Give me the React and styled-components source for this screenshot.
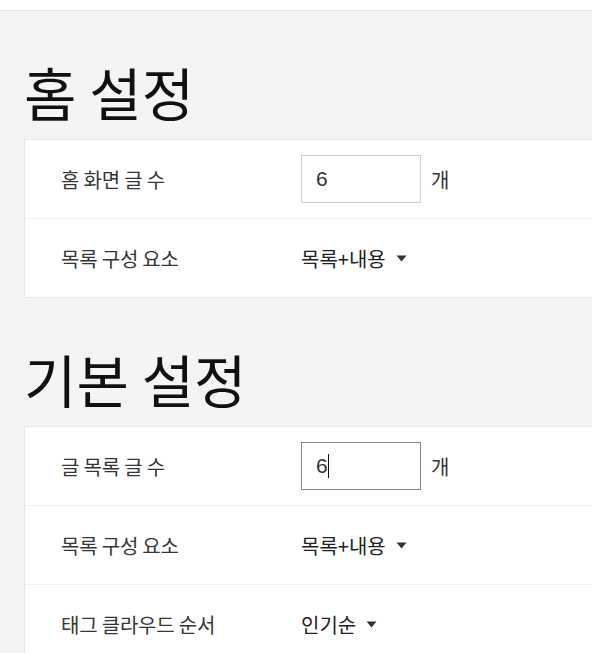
import React from "react";
import styled, { createGlobalStyle } from "styled-components";

const Global = createGlobalStyle`
  html, body { margin: 0; padding: 0; background: #f3f4f6; overflow: hidden; }
  body { font-family: "Noto Sans CJK KR", "Noto Sans", sans-serif; color: #222; }
`;

const TopBar = styled.div`
  height: 10px;
  background: #ffffff;
  border-bottom: 1px solid #e3e5ea;
`;

const Main = styled.main`
  padding: 0 0 40px 24px;
`;

const Section = styled.section`
  display: flex;
  flex-direction: column;
`;

const Heading = styled.h1`
  margin: 0;
  padding: 47px 0 15px 0;
  font-size: 57px;
  line-height: 66px;
  font-weight: 400;
  color: #111;
  letter-spacing: 0;
`;

const Card = styled.div`
  width: 700px;
  background: #fff;
  border: 1px solid #e4e7ec;
  border-right: none;
`;

const Row = styled.div`
  display: grid;
  grid-template-columns: 240px 1fr;
  align-items: center;
  height: 78px;
  padding-left: 36px;
  & + & { border-top: 1px solid #eeeff2; }
`;

const Label = styled.div`
  font-size: 20px;
  color: #363636;
  letter-spacing: -0.2px;
`;

const Control = styled.div`
  display: flex;
  align-items: center;
  gap: 10px;
`;

const NumInput = styled.div`
  box-sizing: border-box;
  width: 120px;
  height: 48px;
  border: 1px solid ${(p) => (p.$focused ? "#7f8795" : "#c8d0dc")};
  display: flex;
  align-items: center;
  padding-left: 14px;
  font-family: "Liberation Sans", sans-serif;
  font-size: 21px;
  color: #333;
`;

const Caret = styled.span`
  display: inline-block;
  width: 1px;
  height: 24px;
  background: #111;
`;

const Unit = styled.span`
  font-size: 20px;
  color: #333;
`;

const Select = styled.div`
  display: flex;
  align-items: center;
  gap: 10px;
  font-size: 20px;
  color: #222;
  letter-spacing: 0;
`;

const Arrow = () => (
  <svg width="11" height="7" viewBox="0 0 11 7">
    <path d="M0.5 0.5 L10.5 0.5 L5.5 6.5 Z" fill="#333" />
  </svg>
);

export default function App() {
  return (
    <>
      <Global />
      <TopBar />
      <Main>
        <Section>
          <Heading>홈 설정</Heading>
          <Card>
            <Row>
              <Label>홈 화면 글 수</Label>
              <Control>
                <NumInput>6</NumInput>
                <Unit>개</Unit>
              </Control>
            </Row>
            <Row>
              <Label>목록 구성 요소</Label>
              <Select>목록+내용 <Arrow /></Select>
            </Row>
          </Card>
        </Section>
        <Section>
          <Heading>기본 설정</Heading>
          <Card>
            <Row>
              <Label>글 목록 글 수</Label>
              <Control>
                <NumInput $focused>6<Caret /></NumInput>
                <Unit>개</Unit>
              </Control>
            </Row>
            <Row>
              <Label>목록 구성 요소</Label>
              <Select>목록+내용 <Arrow /></Select>
            </Row>
            <Row>
              <Label>태그 클라우드 순서</Label>
              <Select>인기순 <Arrow /></Select>
            </Row>
          </Card>
        </Section>
      </Main>
    </>
  );
}
